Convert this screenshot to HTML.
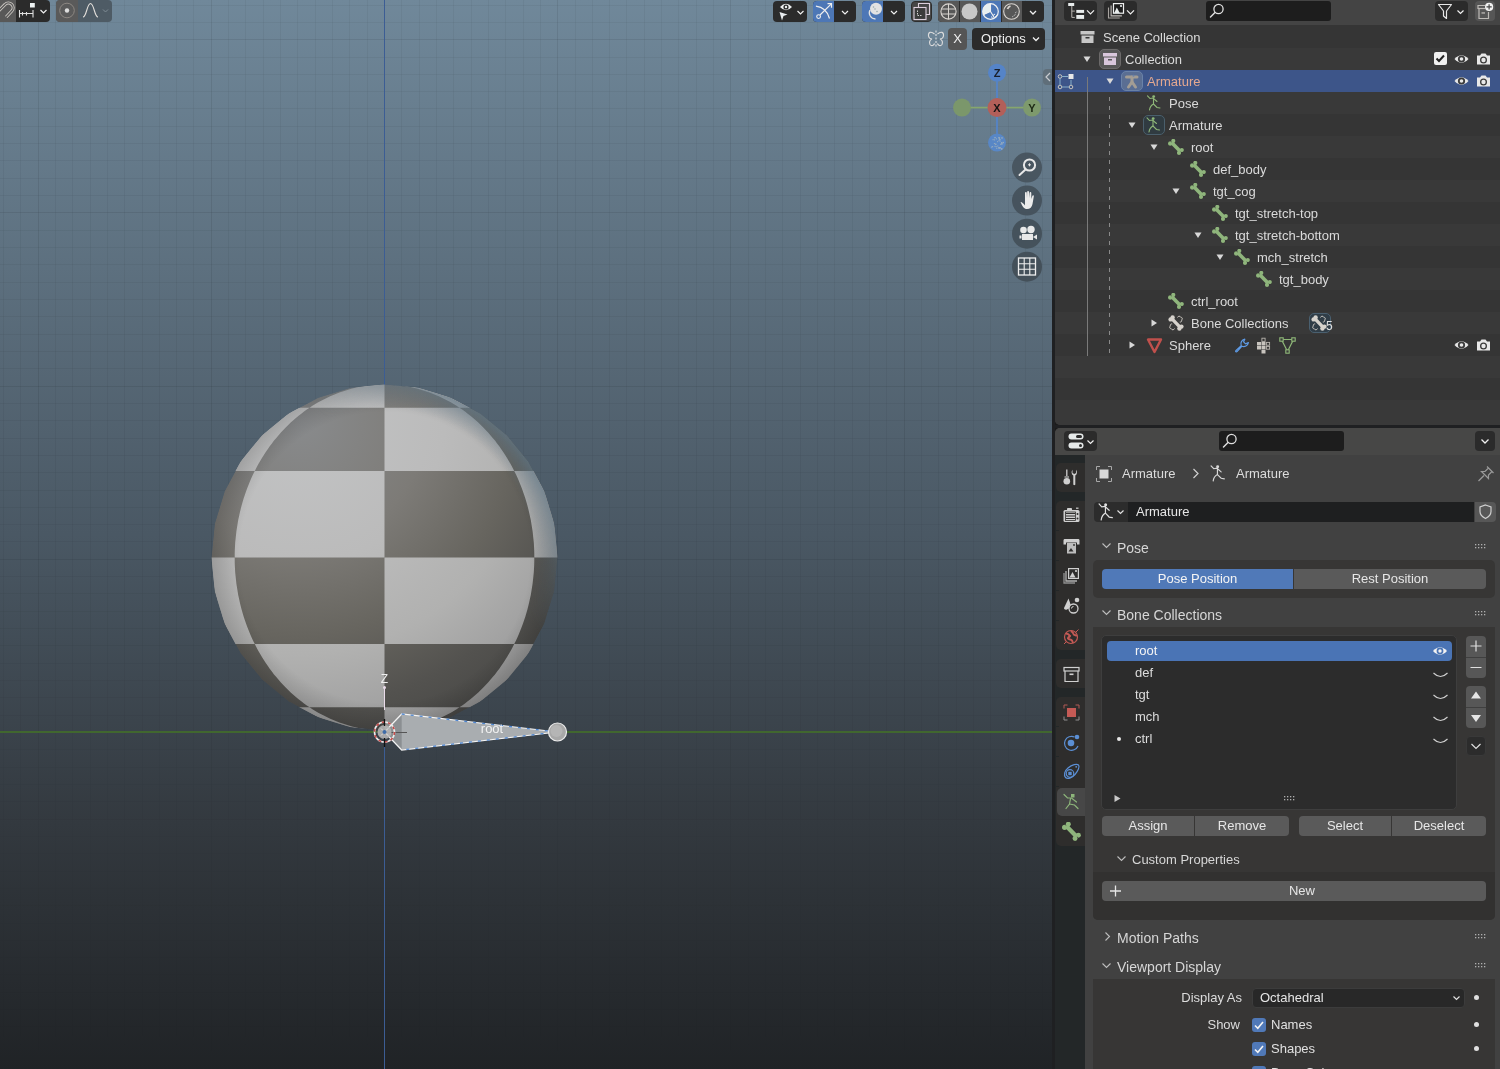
<!DOCTYPE html>
<html><head><meta charset="utf-8">
<style>
*{margin:0;padding:0;box-sizing:border-box}
html,body{width:1500px;height:1069px;overflow:hidden;background:#1b1b1b;font-family:"Liberation Sans",sans-serif;font-size:13px;color:#d8d8d8}
.a{position:absolute}
.t{position:absolute;white-space:nowrap;line-height:16px;will-change:transform}
svg{overflow:visible}
#vp{position:absolute;left:0;top:0;width:1052px;height:1069px;overflow:hidden;background:linear-gradient(to bottom,#70889a 0%,#4a5864 50%,#33393f 77%,#202326 100%)}
.btn{position:absolute;border-radius:4px}
.dk{background:#2b2b2b}
.gr{background:#565656}
.bl{background:#4d77b6}
</style></head><body>
<div id="vp"><svg width="1052" height="1069" style="position:absolute;left:0;top:0"><defs><linearGradient id="gf" x1="0" y1="0" x2="0" y2="1069" gradientUnits="userSpaceOnUse"><stop offset="0" stop-color="#fff" stop-opacity="1"/><stop offset="0.45" stop-color="#fff" stop-opacity="1"/><stop offset="0.68" stop-color="#fff" stop-opacity="0.7"/><stop offset="0.8" stop-color="#fff" stop-opacity="0.3"/><stop offset="1" stop-color="#fff" stop-opacity="0"/></linearGradient><mask id="gm"><rect width="1052" height="1069" fill="url(#gf)"/></mask></defs><g mask="url(#gm)"><path d="M3.5 0V1069M20.5 0V1069M55.5 0V1069M72.5 0V1069M90.5 0V1069M107.5 0V1069M124.5 0V1069M142.5 0V1069M159.5 0V1069M176.5 0V1069M193.5 0V1069M228.5 0V1069M245.5 0V1069M263.5 0V1069M280.5 0V1069M297.5 0V1069M315.5 0V1069M332.5 0V1069M349.5 0V1069M367.5 0V1069M401.5 0V1069M419.5 0V1069M436.5 0V1069M453.5 0V1069M471.5 0V1069M488.5 0V1069M505.5 0V1069M523.5 0V1069M540.5 0V1069M575.5 0V1069M592.5 0V1069M609.5 0V1069M626.5 0V1069M644.5 0V1069M661.5 0V1069M678.5 0V1069M696.5 0V1069M713.5 0V1069M748.5 0V1069M765.5 0V1069M782.5 0V1069M800.5 0V1069M817.5 0V1069M834.5 0V1069M852.5 0V1069M869.5 0V1069M886.5 0V1069M921.5 0V1069M938.5 0V1069M956.5 0V1069M973.5 0V1069M990.5 0V1069M1008.5 0V1069M1025.5 0V1069M1042.5 0V1069M0 5.5H1052M0 22.5H1052M0 57.5H1052M0 74.5H1052M0 91.5H1052M0 108.5H1052M0 126.5H1052M0 143.5H1052M0 160.5H1052M0 178.5H1052M0 195.5H1052M0 230.5H1052M0 247.5H1052M0 264.5H1052M0 282.5H1052M0 299.5H1052M0 316.5H1052M0 334.5H1052M0 351.5H1052M0 368.5H1052M0 403.5H1052M0 420.5H1052M0 438.5H1052M0 455.5H1052M0 472.5H1052M0 490.5H1052M0 507.5H1052M0 524.5H1052M0 541.5H1052M0 576.5H1052M0 593.5H1052M0 611.5H1052M0 628.5H1052M0 645.5H1052M0 663.5H1052M0 680.5H1052M0 697.5H1052M0 715.5H1052M0 749.5H1052M0 767.5H1052M0 784.5H1052M0 801.5H1052M0 819.5H1052M0 836.5H1052M0 853.5H1052M0 871.5H1052M0 888.5H1052M0 923.5H1052M0 940.5H1052M0 957.5H1052M0 974.5H1052M0 992.5H1052M0 1009.5H1052M0 1026.5H1052M0 1044.5H1052M0 1061.5H1052" stroke="#000" stroke-opacity="0.045" stroke-width="1"/><path d="M38.5 0V1069M211.5 0V1069M384.5 0V1069M557.5 0V1069M730.5 0V1069M904.5 0V1069M0 39.5H1052M0 212.5H1052M0 386.5H1052M0 559.5H1052M0 732.5H1052M0 905.5H1052" stroke="#000" stroke-opacity="0.08" stroke-width="1"/></g></svg><!-- viewport overlays -->
<div class="a" style="left:384px;top:0;width:1px;height:1069px;background:#3c5d94"></div>
<div class="a" style="left:0;top:731px;width:1052px;height:2px;background:#41672f"></div>
<svg width="1052" height="1069" style="position:absolute;left:0;top:0">
<defs><clipPath id="sc"><polygon points="557.5,557.5 554.2,591.3 544.3,623.7 528.3,653.6 506.8,679.8 480.6,701.3 450.7,717.3 418.3,727.2 384.5,730.5 350.7,727.2 318.3,717.3 288.4,701.3 262.2,679.8 240.7,653.6 224.7,623.7 214.8,591.3 211.5,557.5 214.8,523.7 224.7,491.3 240.7,461.4 262.2,435.2 288.4,413.7 318.3,397.7 350.7,387.8 384.5,384.5 418.3,387.8 450.7,397.7 480.6,413.7 506.8,435.2 528.3,461.4 544.3,491.3 554.2,523.7"/></clipPath>
<radialGradient id="gd" cx="300" cy="420" r="360" gradientUnits="userSpaceOnUse"><stop offset="0" stop-color="#898b8d"/><stop offset="0.35" stop-color="#7d7b77"/><stop offset="0.6" stop-color="#67655f"/><stop offset="0.8" stop-color="#53524f"/><stop offset="1" stop-color="#454543"/></radialGradient>
<radialGradient id="gl" cx="300" cy="420" r="360" gradientUnits="userSpaceOnUse"><stop offset="0" stop-color="#c3c4c5"/><stop offset="0.4" stop-color="#bbbbbb"/><stop offset="0.65" stop-color="#b1b1b0"/><stop offset="0.85" stop-color="#a0a0a0"/><stop offset="1" stop-color="#8c8c8c"/></radialGradient>
<radialGradient id="rim" cx="384.5" cy="557.5" r="173.0" gradientUnits="userSpaceOnUse"><stop offset="0" stop-color="#000" stop-opacity="0"/><stop offset="0.84" stop-color="#000" stop-opacity="0"/><stop offset="1" stop-color="#000" stop-opacity="0.16"/></radialGradient><radialGradient id="brim" cx="384.5" cy="557.5" r="173.0" gradientUnits="userSpaceOnUse"><stop offset="0" stop-color="#647f92" stop-opacity="0"/><stop offset="0.86" stop-color="#647f92" stop-opacity="0"/><stop offset="1" stop-color="#647f92" stop-opacity="0.7"/></radialGradient><linearGradient id="bmg" x1="514.2" y1="427.8" x2="315.3" y2="626.7" gradientUnits="userSpaceOnUse"><stop offset="0" stop-color="#fff"/><stop offset="0.45" stop-color="#000"/></linearGradient><mask id="bm"><rect x="0" y="0" width="1052" height="1069" fill="url(#bmg)"/></mask></defs>
<g clip-path="url(#sc)">
<polygon points="557.5,557.5 554.2,591.3 544.3,623.7 528.3,653.6 506.8,679.8 480.6,701.3 450.7,717.3 418.3,727.2 384.5,730.5 350.7,727.2 318.3,717.3 288.4,701.3 262.2,679.8 240.7,653.6 224.7,623.7 214.8,591.3 211.5,557.5 214.8,523.7 224.7,491.3 240.7,461.4 262.2,435.2 288.4,413.7 318.3,397.7 350.7,387.8 384.5,384.5 418.3,387.8 450.7,397.7 480.6,413.7 506.8,435.2 528.3,461.4 544.3,491.3 554.2,523.7" fill="url(#gd)"/>
<polygon points="384.5,730.5 384.5,730.5 384.5,730.5 384.5,730.5 384.5,730.5 384.5,730.5 384.5,730.5 384.5,730.5 384.5,730.5 384.5,730.5 384.5,730.5 384.5,730.5 384.5,730.5 384.5,730.5 384.5,730.5 384.5,730.5 384.5,730.5 384.5,730.5 384.5,730.5 384.5,730.5 384.5,730.5 384.5,730.5 384.5,730.5 384.5,730.5 384.5,730.5 381.2,730.5 378.0,730.3 374.7,730.1 371.4,729.8 368.2,729.5 364.9,729.0 361.7,728.5 358.5,727.9 355.3,727.2 352.1,726.4 348.9,725.5 345.7,724.6 342.6,723.6 339.4,722.5 336.3,721.3 333.3,720.1 330.2,718.7 327.2,717.3 324.2,715.8 321.2,714.3 318.2,712.7 315.3,711.0 312.4,709.2 309.6,707.3 308.7,707.3 307.8,707.3 306.9,707.3 306.1,707.3 305.3,707.3 304.6,707.3 303.9,707.3 303.2,707.3 302.6,707.3 302.0,707.3 301.5,707.3 300.9,707.3 300.5,707.3 300.1,707.3 299.7,707.3 299.3,707.3 299.0,707.3 298.7,707.3 298.5,707.3 298.3,707.3 298.2,707.3 298.1,707.3 298.0,707.3 298.0,707.3 301.3,709.2 304.6,711.0 308.0,712.7 311.4,714.3 314.8,715.8 318.3,717.3 321.8,718.7 325.3,720.1 328.9,721.3 332.5,722.5 336.1,723.6 339.7,724.6 343.4,725.5 347.1,726.4 350.7,727.2 354.5,727.9 358.2,728.5 361.9,729.0 365.7,729.5 369.4,729.8 373.2,730.1 377.0,730.3 380.7,730.5" fill="url(#gl)"/>
<polygon points="384.5,730.5 384.5,730.5 384.5,730.5 384.5,730.5 384.5,730.5 384.5,730.5 384.5,730.5 384.5,730.5 384.5,730.5 384.5,730.5 384.5,730.5 384.5,730.5 384.5,730.5 384.5,730.5 384.5,730.5 384.5,730.5 384.5,730.5 384.5,730.5 384.5,730.5 384.5,730.5 384.5,730.5 384.5,730.5 384.5,730.5 384.5,730.5 384.5,730.5 387.8,730.5 391.0,730.3 394.3,730.1 397.6,729.8 400.8,729.5 404.1,729.0 407.3,728.5 410.5,727.9 413.7,727.2 416.9,726.4 420.1,725.5 423.3,724.6 426.4,723.6 429.6,722.5 432.7,721.3 435.7,720.1 438.8,718.7 441.8,717.3 444.8,715.8 447.8,714.3 450.8,712.7 453.7,711.0 456.6,709.2 459.4,707.3 457.5,707.3 455.4,707.3 453.1,707.3 450.8,707.3 448.3,707.3 445.7,707.3 442.9,707.3 440.1,707.3 437.2,707.3 434.1,707.3 431.0,707.3 427.8,707.3 424.4,707.3 421.1,707.3 417.6,707.3 414.1,707.3 410.5,707.3 406.9,707.3 403.2,707.3 399.5,707.3 395.8,707.3 392.0,707.3 388.3,707.3 384.5,707.3 384.5,709.2 384.5,711.0 384.5,712.7 384.5,714.3 384.5,715.8 384.5,717.3 384.5,718.7 384.5,720.1 384.5,721.3 384.5,722.5 384.5,723.6 384.5,724.6 384.5,725.5 384.5,726.4 384.5,727.2 384.5,727.9 384.5,728.5 384.5,729.0 384.5,729.5 384.5,729.8 384.5,730.1 384.5,730.3 384.5,730.5" fill="url(#gl)"/>
<polygon points="309.6,707.3 311.5,707.3 313.6,707.3 315.9,707.3 318.2,707.3 320.7,707.3 323.3,707.3 326.1,707.3 328.9,707.3 331.8,707.3 334.9,707.3 338.0,707.3 341.2,707.3 344.6,707.3 347.9,707.3 351.4,707.3 354.9,707.3 358.5,707.3 362.1,707.3 365.8,707.3 369.5,707.3 373.2,707.3 377.0,707.3 380.7,707.3 384.5,707.3 384.5,705.4 384.5,703.4 384.5,701.3 384.5,699.2 384.5,697.0 384.5,694.8 384.5,692.4 384.5,690.0 384.5,687.6 384.5,685.0 384.5,682.5 384.5,679.8 384.5,677.1 384.5,674.4 384.5,671.6 384.5,668.7 384.5,665.8 384.5,662.8 384.5,659.8 384.5,656.7 384.5,653.6 384.5,650.5 384.5,647.2 384.5,644.0 378.0,644.0 371.4,644.0 364.9,644.0 358.5,644.0 352.1,644.0 345.7,644.0 339.4,644.0 333.3,644.0 327.2,644.0 321.2,644.0 315.3,644.0 309.6,644.0 304.0,644.0 298.6,644.0 293.3,644.0 288.2,644.0 283.3,644.0 278.6,644.0 274.0,644.0 269.7,644.0 265.6,644.0 261.8,644.0 258.1,644.0 254.8,644.0 256.4,647.2 258.1,650.5 259.9,653.6 261.8,656.7 263.7,659.8 265.6,662.8 267.7,665.8 269.7,668.7 271.9,671.6 274.0,674.4 276.3,677.1 278.6,679.8 280.9,682.5 283.3,685.0 285.7,687.6 288.2,690.0 290.7,692.4 293.3,694.8 295.9,697.0 298.6,699.2 301.3,701.3 304.0,703.4 306.8,705.4" fill="url(#gl)"/>
<polygon points="459.4,707.3 460.3,707.3 461.2,707.3 462.1,707.3 462.9,707.3 463.7,707.3 464.4,707.3 465.1,707.3 465.8,707.3 466.4,707.3 467.0,707.3 467.5,707.3 468.1,707.3 468.5,707.3 468.9,707.3 469.3,707.3 469.7,707.3 470.0,707.3 470.3,707.3 470.5,707.3 470.7,707.3 470.8,707.3 470.9,707.3 471.0,707.3 471.0,707.3 474.2,705.4 477.5,703.4 480.6,701.3 483.7,699.2 486.8,697.0 489.8,694.8 492.8,692.4 495.7,690.0 498.6,687.6 501.4,685.0 504.1,682.5 506.8,679.8 509.5,677.1 512.0,674.4 514.6,671.6 517.0,668.7 519.4,665.8 521.8,662.8 524.0,659.8 526.2,656.7 528.3,653.6 530.4,650.5 532.4,647.2 534.3,644.0 534.3,644.0 534.2,644.0 534.0,644.0 533.8,644.0 533.4,644.0 533.0,644.0 532.6,644.0 532.0,644.0 531.4,644.0 530.8,644.0 530.0,644.0 529.2,644.0 528.3,644.0 527.4,644.0 526.4,644.0 525.3,644.0 524.1,644.0 522.9,644.0 521.6,644.0 520.3,644.0 518.9,644.0 517.4,644.0 515.9,644.0 514.2,644.0 512.6,647.2 510.9,650.5 509.1,653.6 507.2,656.7 505.3,659.8 503.4,662.8 501.3,665.8 499.3,668.7 497.1,671.6 495.0,674.4 492.7,677.1 490.4,679.8 488.1,682.5 485.7,685.0 483.3,687.6 480.8,690.0 478.3,692.4 475.7,694.8 473.1,697.0 470.4,699.2 467.7,701.3 465.0,703.4 462.2,705.4" fill="url(#gl)"/>
<polygon points="234.7,644.0 234.7,644.0 234.8,644.0 235.0,644.0 235.2,644.0 235.6,644.0 236.0,644.0 236.4,644.0 237.0,644.0 237.6,644.0 238.2,644.0 239.0,644.0 239.8,644.0 240.7,644.0 241.6,644.0 242.6,644.0 243.7,644.0 244.9,644.0 246.1,644.0 247.4,644.0 248.7,644.0 250.1,644.0 251.6,644.0 253.1,644.0 254.8,644.0 253.1,640.7 251.6,637.4 250.1,634.0 248.7,630.6 247.4,627.2 246.1,623.7 244.9,620.2 243.7,616.7 242.6,613.1 241.6,609.5 240.7,605.9 239.8,602.3 239.0,598.6 238.2,594.9 237.6,591.3 237.0,587.5 236.4,583.8 236.0,580.1 235.6,576.3 235.2,572.6 235.0,568.8 234.8,565.0 234.7,561.3 234.7,557.5 232.8,557.5 231.0,557.5 229.3,557.5 227.7,557.5 226.2,557.5 224.7,557.5 223.3,557.5 221.9,557.5 220.7,557.5 219.5,557.5 218.4,557.5 217.4,557.5 216.5,557.5 215.6,557.5 214.8,557.5 214.1,557.5 213.5,557.5 213.0,557.5 212.5,557.5 212.2,557.5 211.9,557.5 211.7,557.5 211.5,557.5 211.5,557.5 211.5,561.3 211.7,565.0 211.9,568.8 212.2,572.6 212.5,576.3 213.0,580.1 213.5,583.8 214.1,587.5 214.8,591.3 215.6,594.9 216.5,598.6 217.4,602.3 218.4,605.9 219.5,609.5 220.7,613.1 221.9,616.7 223.3,620.2 224.7,623.7 226.2,627.2 227.7,630.6 229.3,634.0 231.0,637.4 232.8,640.7" fill="url(#gl)"/>
<polygon points="384.5,644.0 391.0,644.0 397.6,644.0 404.1,644.0 410.5,644.0 416.9,644.0 423.3,644.0 429.6,644.0 435.7,644.0 441.8,644.0 447.8,644.0 453.7,644.0 459.4,644.0 465.0,644.0 470.4,644.0 475.7,644.0 480.8,644.0 485.7,644.0 490.4,644.0 495.0,644.0 499.3,644.0 503.4,644.0 507.2,644.0 510.9,644.0 514.2,644.0 515.9,640.7 517.4,637.4 518.9,634.0 520.3,630.6 521.6,627.2 522.9,623.7 524.1,620.2 525.3,616.7 526.4,613.1 527.4,609.5 528.3,605.9 529.2,602.3 530.0,598.6 530.8,594.9 531.4,591.3 532.0,587.5 532.6,583.8 533.0,580.1 533.4,576.3 533.8,572.6 534.0,568.8 534.2,565.0 534.3,561.3 534.3,557.5 530.4,557.5 526.2,557.5 521.8,557.5 517.0,557.5 512.0,557.5 506.8,557.5 501.4,557.5 495.7,557.5 489.8,557.5 483.7,557.5 477.5,557.5 471.0,557.5 464.4,557.5 457.6,557.5 450.7,557.5 443.7,557.5 436.5,557.5 429.3,557.5 421.9,557.5 414.5,557.5 407.1,557.5 399.6,557.5 392.0,557.5 384.5,557.5 384.5,561.3 384.5,565.0 384.5,568.8 384.5,572.6 384.5,576.3 384.5,580.1 384.5,583.8 384.5,587.5 384.5,591.3 384.5,594.9 384.5,598.6 384.5,602.3 384.5,605.9 384.5,609.5 384.5,613.1 384.5,616.7 384.5,620.2 384.5,623.7 384.5,627.2 384.5,630.6 384.5,634.0 384.5,637.4 384.5,640.7" fill="url(#gl)"/>
<polygon points="234.7,557.5 238.6,557.5 242.8,557.5 247.2,557.5 252.0,557.5 257.0,557.5 262.2,557.5 267.6,557.5 273.3,557.5 279.2,557.5 285.3,557.5 291.5,557.5 298.0,557.5 304.6,557.5 311.4,557.5 318.3,557.5 325.3,557.5 332.5,557.5 339.7,557.5 347.1,557.5 354.5,557.5 361.9,557.5 369.4,557.5 377.0,557.5 384.5,557.5 384.5,553.7 384.5,550.0 384.5,546.2 384.5,542.4 384.5,538.7 384.5,534.9 384.5,531.2 384.5,527.5 384.5,523.7 384.5,520.1 384.5,516.4 384.5,512.7 384.5,509.1 384.5,505.5 384.5,501.9 384.5,498.3 384.5,494.8 384.5,491.3 384.5,487.8 384.5,484.4 384.5,481.0 384.5,477.6 384.5,474.3 384.5,471.0 378.0,471.0 371.4,471.0 364.9,471.0 358.5,471.0 352.1,471.0 345.7,471.0 339.4,471.0 333.3,471.0 327.2,471.0 321.2,471.0 315.3,471.0 309.6,471.0 304.0,471.0 298.6,471.0 293.3,471.0 288.2,471.0 283.3,471.0 278.6,471.0 274.0,471.0 269.7,471.0 265.6,471.0 261.8,471.0 258.1,471.0 254.8,471.0 253.1,474.3 251.6,477.6 250.1,481.0 248.7,484.4 247.4,487.8 246.1,491.3 244.9,494.8 243.7,498.3 242.6,501.9 241.6,505.5 240.7,509.1 239.8,512.7 239.0,516.4 238.2,520.1 237.6,523.7 237.0,527.5 236.4,531.2 236.0,534.9 235.6,538.7 235.2,542.4 235.0,546.2 234.8,550.0 234.7,553.7" fill="url(#gl)"/>
<polygon points="534.3,557.5 536.2,557.5 538.0,557.5 539.7,557.5 541.3,557.5 542.8,557.5 544.3,557.5 545.7,557.5 547.1,557.5 548.3,557.5 549.5,557.5 550.6,557.5 551.6,557.5 552.5,557.5 553.4,557.5 554.2,557.5 554.9,557.5 555.5,557.5 556.0,557.5 556.5,557.5 556.8,557.5 557.1,557.5 557.3,557.5 557.5,557.5 557.5,557.5 557.5,553.7 557.3,550.0 557.1,546.2 556.8,542.4 556.5,538.7 556.0,534.9 555.5,531.2 554.9,527.5 554.2,523.7 553.4,520.1 552.5,516.4 551.6,512.7 550.6,509.1 549.5,505.5 548.3,501.9 547.1,498.3 545.7,494.8 544.3,491.3 542.8,487.8 541.3,484.4 539.7,481.0 538.0,477.6 536.2,474.3 534.3,471.0 534.3,471.0 534.2,471.0 534.0,471.0 533.8,471.0 533.4,471.0 533.0,471.0 532.6,471.0 532.0,471.0 531.4,471.0 530.8,471.0 530.0,471.0 529.2,471.0 528.3,471.0 527.4,471.0 526.4,471.0 525.3,471.0 524.1,471.0 522.9,471.0 521.6,471.0 520.3,471.0 518.9,471.0 517.4,471.0 515.9,471.0 514.2,471.0 515.9,474.3 517.4,477.6 518.9,481.0 520.3,484.4 521.6,487.8 522.9,491.3 524.1,494.8 525.3,498.3 526.4,501.9 527.4,505.5 528.3,509.1 529.2,512.7 530.0,516.4 530.8,520.1 531.4,523.7 532.0,527.5 532.6,531.2 533.0,534.9 533.4,538.7 533.8,542.4 534.0,546.2 534.2,550.0 534.3,553.7" fill="url(#gl)"/>
<polygon points="234.7,471.0 234.7,471.0 234.8,471.0 235.0,471.0 235.2,471.0 235.6,471.0 236.0,471.0 236.4,471.0 237.0,471.0 237.6,471.0 238.2,471.0 239.0,471.0 239.8,471.0 240.7,471.0 241.6,471.0 242.6,471.0 243.7,471.0 244.9,471.0 246.1,471.0 247.4,471.0 248.7,471.0 250.1,471.0 251.6,471.0 253.1,471.0 254.8,471.0 256.4,467.8 258.1,464.5 259.9,461.4 261.8,458.3 263.7,455.2 265.6,452.2 267.7,449.2 269.7,446.3 271.9,443.4 274.0,440.6 276.3,437.9 278.6,435.2 280.9,432.5 283.3,430.0 285.7,427.4 288.2,425.0 290.7,422.6 293.3,420.2 295.9,418.0 298.6,415.8 301.3,413.7 304.0,411.6 306.8,409.6 309.6,407.7 308.7,407.7 307.8,407.7 306.9,407.7 306.1,407.7 305.3,407.7 304.6,407.7 303.9,407.7 303.2,407.7 302.6,407.7 302.0,407.7 301.5,407.7 300.9,407.7 300.5,407.7 300.1,407.7 299.7,407.7 299.3,407.7 299.0,407.7 298.7,407.7 298.5,407.7 298.3,407.7 298.2,407.7 298.1,407.7 298.0,407.7 298.0,407.7 294.8,409.6 291.5,411.6 288.4,413.7 285.3,415.8 282.2,418.0 279.2,420.2 276.2,422.6 273.3,425.0 270.4,427.4 267.6,430.0 264.9,432.5 262.2,435.2 259.5,437.9 257.0,440.6 254.4,443.4 252.0,446.3 249.6,449.2 247.2,452.2 245.0,455.2 242.8,458.3 240.7,461.4 238.6,464.5 236.6,467.8" fill="url(#gl)"/>
<polygon points="384.5,471.0 391.0,471.0 397.6,471.0 404.1,471.0 410.5,471.0 416.9,471.0 423.3,471.0 429.6,471.0 435.7,471.0 441.8,471.0 447.8,471.0 453.7,471.0 459.4,471.0 465.0,471.0 470.4,471.0 475.7,471.0 480.8,471.0 485.7,471.0 490.4,471.0 495.0,471.0 499.3,471.0 503.4,471.0 507.2,471.0 510.9,471.0 514.2,471.0 512.6,467.8 510.9,464.5 509.1,461.4 507.2,458.3 505.3,455.2 503.4,452.2 501.3,449.2 499.3,446.3 497.1,443.4 495.0,440.6 492.7,437.9 490.4,435.2 488.1,432.5 485.7,430.0 483.3,427.4 480.8,425.0 478.3,422.6 475.7,420.2 473.1,418.0 470.4,415.8 467.7,413.7 465.0,411.6 462.2,409.6 459.4,407.7 457.5,407.7 455.4,407.7 453.1,407.7 450.8,407.7 448.3,407.7 445.7,407.7 442.9,407.7 440.1,407.7 437.2,407.7 434.1,407.7 431.0,407.7 427.8,407.7 424.4,407.7 421.1,407.7 417.6,407.7 414.1,407.7 410.5,407.7 406.9,407.7 403.2,407.7 399.5,407.7 395.8,407.7 392.0,407.7 388.3,407.7 384.5,407.7 384.5,409.6 384.5,411.6 384.5,413.7 384.5,415.8 384.5,418.0 384.5,420.2 384.5,422.6 384.5,425.0 384.5,427.4 384.5,430.0 384.5,432.5 384.5,435.2 384.5,437.9 384.5,440.6 384.5,443.4 384.5,446.3 384.5,449.2 384.5,452.2 384.5,455.2 384.5,458.3 384.5,461.4 384.5,464.5 384.5,467.8" fill="url(#gl)"/>
<polygon points="309.6,407.7 311.5,407.7 313.6,407.7 315.9,407.7 318.2,407.7 320.7,407.7 323.3,407.7 326.1,407.7 328.9,407.7 331.8,407.7 334.9,407.7 338.0,407.7 341.2,407.7 344.6,407.7 347.9,407.7 351.4,407.7 354.9,407.7 358.5,407.7 362.1,407.7 365.8,407.7 369.5,407.7 373.2,407.7 377.0,407.7 380.7,407.7 384.5,407.7 384.5,405.8 384.5,404.0 384.5,402.3 384.5,400.7 384.5,399.2 384.5,397.7 384.5,396.3 384.5,394.9 384.5,393.7 384.5,392.5 384.5,391.4 384.5,390.4 384.5,389.5 384.5,388.6 384.5,387.8 384.5,387.1 384.5,386.5 384.5,386.0 384.5,385.5 384.5,385.2 384.5,384.9 384.5,384.7 384.5,384.5 384.5,384.5 384.5,384.5 384.5,384.5 384.5,384.5 384.5,384.5 384.5,384.5 384.5,384.5 384.5,384.5 384.5,384.5 384.5,384.5 384.5,384.5 384.5,384.5 384.5,384.5 384.5,384.5 384.5,384.5 384.5,384.5 384.5,384.5 384.5,384.5 384.5,384.5 384.5,384.5 384.5,384.5 384.5,384.5 384.5,384.5 384.5,384.5 384.5,384.5 381.2,384.5 378.0,384.7 374.7,384.9 371.4,385.2 368.2,385.5 364.9,386.0 361.7,386.5 358.5,387.1 355.3,387.8 352.1,388.6 348.9,389.5 345.7,390.4 342.6,391.4 339.4,392.5 336.3,393.7 333.3,394.9 330.2,396.3 327.2,397.7 324.2,399.2 321.2,400.7 318.2,402.3 315.3,404.0 312.4,405.8" fill="url(#gl)"/>
<polygon points="459.4,407.7 460.3,407.7 461.2,407.7 462.1,407.7 462.9,407.7 463.7,407.7 464.4,407.7 465.1,407.7 465.8,407.7 466.4,407.7 467.0,407.7 467.5,407.7 468.1,407.7 468.5,407.7 468.9,407.7 469.3,407.7 469.7,407.7 470.0,407.7 470.3,407.7 470.5,407.7 470.7,407.7 470.8,407.7 470.9,407.7 471.0,407.7 471.0,407.7 467.7,405.8 464.4,404.0 461.0,402.3 457.6,400.7 454.2,399.2 450.7,397.7 447.2,396.3 443.7,394.9 440.1,393.7 436.5,392.5 432.9,391.4 429.3,390.4 425.6,389.5 421.9,388.6 418.3,387.8 414.5,387.1 410.8,386.5 407.1,386.0 403.3,385.5 399.6,385.2 395.8,384.9 392.0,384.7 388.3,384.5 384.5,384.5 384.5,384.5 384.5,384.5 384.5,384.5 384.5,384.5 384.5,384.5 384.5,384.5 384.5,384.5 384.5,384.5 384.5,384.5 384.5,384.5 384.5,384.5 384.5,384.5 384.5,384.5 384.5,384.5 384.5,384.5 384.5,384.5 384.5,384.5 384.5,384.5 384.5,384.5 384.5,384.5 384.5,384.5 384.5,384.5 384.5,384.5 384.5,384.5 387.8,384.5 391.0,384.7 394.3,384.9 397.6,385.2 400.8,385.5 404.1,386.0 407.3,386.5 410.5,387.1 413.7,387.8 416.9,388.6 420.1,389.5 423.3,390.4 426.4,391.4 429.6,392.5 432.7,393.7 435.7,394.9 438.8,396.3 441.8,397.7 444.8,399.2 447.8,400.7 450.8,402.3 453.7,404.0 456.6,405.8" fill="url(#gl)"/>
<polygon points="557.5,557.5 554.2,591.3 544.3,623.7 528.3,653.6 506.8,679.8 480.6,701.3 450.7,717.3 418.3,727.2 384.5,730.5 350.7,727.2 318.3,717.3 288.4,701.3 262.2,679.8 240.7,653.6 224.7,623.7 214.8,591.3 211.5,557.5 214.8,523.7 224.7,491.3 240.7,461.4 262.2,435.2 288.4,413.7 318.3,397.7 350.7,387.8 384.5,384.5 418.3,387.8 450.7,397.7 480.6,413.7 506.8,435.2 528.3,461.4 544.3,491.3 554.2,523.7" fill="url(#rim)"/>
<polygon points="557.5,557.5 554.2,591.3 544.3,623.7 528.3,653.6 506.8,679.8 480.6,701.3 450.7,717.3 418.3,727.2 384.5,730.5 350.7,727.2 318.3,717.3 288.4,701.3 262.2,679.8 240.7,653.6 224.7,623.7 214.8,591.3 211.5,557.5 214.8,523.7 224.7,491.3 240.7,461.4 262.2,435.2 288.4,413.7 318.3,397.7 350.7,387.8 384.5,384.5 418.3,387.8 450.7,397.7 480.6,413.7 506.8,435.2 528.3,461.4 544.3,491.3 554.2,523.7" fill="url(#brim)" mask="url(#bm)"/>
</g></svg><!-- bone + cursor -->
<svg class="a" style="left:0;top:0;will-change:transform" width="1052" height="1069">
 <line x1="384.5" y1="687" x2="384.5" y2="710" stroke="#eadcea" stroke-width="1"/>
 <circle cx="384.5" cy="687.5" r="1.5" fill="#eadcea"/>
 <text x="384.5" y="683" fill="#f0f0f0" font-size="12" font-family="Liberation Sans" text-anchor="middle">Z</text>
 <polygon points="384.5,732 401.7,714 557.5,732 401.7,750" fill="#a9adb0"/>
 <polygon points="384.5,732 401.7,714 401.7,750" fill="#8b8f92"/>
 <polyline points="384.5,732 401.7,714 557.5,732 401.7,750 384.5,732" fill="none" stroke="#f4f4f4" stroke-width="1.2"/>
 <polyline points="401.7,714 557.5,732 401.7,750" fill="none" stroke="#4f86d0" stroke-width="1.3" stroke-dasharray="3 6"/>
 <circle cx="557.5" cy="732" r="9" fill="#a8a8a8" stroke="#ececec" stroke-width="1.2"/>
 <circle cx="556.5" cy="731" r="6" fill="#b5b5b5"/>
 <line x1="376" y1="732.5" x2="407" y2="732.5" stroke="#555" stroke-width="1"/>
 <circle cx="384.5" cy="732" r="7" fill="#b4b4b4" opacity=".9"/>
 <circle cx="384.5" cy="732" r="10" fill="none" stroke="#ececec" stroke-width="1.6"/>
 <circle cx="384.5" cy="732" r="10" fill="none" stroke="#c24c4a" stroke-width="1.6" stroke-dasharray="3 3.3"/>
 <line x1="384.5" y1="719" x2="384.5" y2="726" stroke="#111" stroke-width="1.3"/>
 <line x1="384.5" y1="738" x2="384.5" y2="747" stroke="#111" stroke-width="1.3"/>
 <path d="M381 728.5 L383 730.5 M388 728.5 L386 730.5 M381 735.5 L383 733.5 M388 735.5 L386 733.5" stroke="#e8e8e8" stroke-width=".8"/>
 <circle cx="384.5" cy="732" r="2" fill="#3f6ca8"/>
 <text x="492" y="733" fill="#f2f2f2" font-size="13" font-family="Liberation Sans" text-anchor="middle">root</text>
</svg>
<!-- top-left header buttons -->
<div class="btn" style="left:-6px;top:0px;width:56px;height:21.5px;background:#2b2b2b"></div>
<div class="a" style="left:0;top:0px;width:15.5px;height:21.5px;background:#585858"></div>
<svg class="a" style="left:0;top:0px" width="50" height="22">
 <path d="M-3 12.5 L5 4.5 A4.6 4.6 0 0 1 11.8 11 L6.2 17" fill="none" stroke="#cdc9c4" stroke-width="3.2"/>
 <path d="M-3 12.5 L5 4.5 A4.6 4.6 0 0 1 11.8 11 L6.2 17" fill="none" stroke="#585858" stroke-width="1.4"/>
 <path d="M19.5 10 V17.5 M33 10 V17.5 M19.5 13.5 H33 M22.5 12 V15.5 M26.5 12 V15.5" stroke="#e0e0e0" stroke-width="1.1" fill="none"/>
 <rect x="30" y="3" width="4.8" height="4.5" fill="#eef2f2"/>
 <path d="M40.5 10 L43.5 13 L46.5 10" stroke="#f0f0f0" stroke-width="1.2" fill="none"/>
</svg>
<div class="btn" style="left:56px;top:0px;width:56px;height:21.5px;background:#4e5b65"></div>
<div class="a" style="left:56px;top:0px;width:21.5px;height:21.5px;background:#5a5a5a;border-radius:4px 0 0 4px"></div>
<svg class="a" style="left:56px;top:0px" width="56" height="22">
 <circle cx="11" cy="10.5" r="7.3" fill="none" stroke="#8c8782" stroke-width="1"/>
 <circle cx="11" cy="10.5" r="2.2" fill="#dedede"/>
 <path d="M27 17 C30.5 17 31 3.5 34.5 3.5 C38 3.5 38.5 17 42 17" fill="none" stroke="#e4e0dc" stroke-width="1.1"/>
 <path d="M47 9.5 L49.5 12 L52 9.5" stroke="#7f8c95" stroke-width="1" fill="none"/>
</svg>
<!-- top-right header -->
<div class="btn dk" style="left:773px;top:1px;width:34px;height:21px"></div>
<svg class="a" style="left:773px;top:1px" width="34" height="21">
 <path d="M6.5 11 L14.5 13.5 L10.5 15 L9 19.5 Z" fill="#e8ecee"/>
 <path d="M7 6 Q13 -0.5 19 6 Q13 12.5 7 6Z" fill="#eef0f0"/>
 <circle cx="13" cy="6" r="2.6" fill="#2b2b2b"/><circle cx="13" cy="6" r="1.2" fill="#eef0f0"/>
 <path d="M24.5 10 L27.5 13 L30.5 10" stroke="#f0f0f0" stroke-width="1.2" fill="none"/>
</svg>
<div class="btn dk" style="left:813px;top:1px;width:43px;height:21px"></div>
<div class="a bl" style="left:813px;top:1px;width:21px;height:21px;border-radius:4px 0 0 4px"></div>
<svg class="a" style="left:813px;top:1px" width="43" height="21">
 <path d="M2.9 5.2 Q13.5 6.5 16.5 17.5" fill="none" stroke="#eeeeee" stroke-width="1.2"/>
 <path d="M7 14 L18.3 2.9 M14.5 2.7 H18.5 V6.8" fill="none" stroke="#eeeeee" stroke-width="1.2"/>
 <circle cx="5.6" cy="15.6" r="1.9" fill="none" stroke="#eeeeee" stroke-width="1.1"/>
 <path d="M29 10 L32 13 L35 10" stroke="#f0f0f0" stroke-width="1.2" fill="none"/>
</svg>
<div class="btn dk" style="left:862px;top:1px;width:43px;height:21px"></div>
<div class="a bl" style="left:862px;top:1px;width:21px;height:21px;border-radius:4px 0 0 4px"></div>
<svg class="a" style="left:862px;top:1px" width="43" height="21">
 <circle cx="14" cy="7.7" r="6" fill="#e2e2e2"/>
 <circle cx="11.5" cy="6" r=".8" fill="#9aa"/><circle cx="13" cy="8" r=".8" fill="#9aa"/><circle cx="15" cy="10.5" r=".8" fill="#9aa"/>
 <path d="M8 9 A6.2 6.2 0 0 0 13.5 18" fill="none" stroke="#e2e2e2" stroke-width="1.3"/>
 <path d="M29 10 L32 13 L35 10" stroke="#f0f0f0" stroke-width="1.2" fill="none"/>
</svg>
<div class="btn" style="left:911px;top:1px;width:21px;height:21px;background:#454545;border:1px solid #2e2e2e"></div>
<svg class="a" style="left:911px;top:1px" width="21" height="21">
 <path d="M7.5 6 V2.5 H18.5 V13.5 H15" fill="none" stroke="#dccfdc" stroke-width="1.1"/>
 <rect x="3" y="6.5" width="12" height="12" fill="#3a3a3a" stroke="#dccfdc" stroke-width="1.1"/>
 <path d="M6.5 9.5 V14.5 H11" fill="none" stroke="#cfcfcf" stroke-width="1" stroke-dasharray="1.5 1"/>
</svg>
<div class="btn dk" style="left:938px;top:1px;width:106px;height:21px"></div>
<div class="a" style="left:938px;top:1px;width:21px;height:21px;background:#575757;border-radius:4px 0 0 4px"></div>
<div class="a" style="left:959.5px;top:1px;width:20.5px;height:21px;background:#575757"></div>
<div class="a bl" style="left:980.5px;top:1px;width:20.5px;height:21px"></div>
<div class="a" style="left:1001.5px;top:1px;width:20.5px;height:21px;background:#575757"></div>
<svg class="a" style="left:938px;top:1px" width="106" height="21">
 <circle cx="10.5" cy="10.5" r="7.6" fill="none" stroke="#d8d4d0" stroke-width="1.1"/>
 <path d="M10.5 2.9 V18.1 M3 8 H18 M3 13 H18" stroke="#d8d4d0" stroke-width="1"/>
 <circle cx="31.5" cy="10.5" r="8" fill="#c8c8c8"/>
 <path d="M52.5 10.5 V2.7 A7.8 7.8 0 0 0 45.5 14 Z" fill="#e6eef0"/>
 <circle cx="52.5" cy="10.5" r="7.8" fill="none" stroke="#f0f0f0" stroke-width="1.2"/>
 <path d="M52.5 2.7 V10.5 L45.5 13.5 M52.5 10.5 L56.5 17" stroke="#f0f0f0" stroke-width="1.1" fill="none"/>
 <path d="M55 14.5 L57 13 M57 16 L59 14.5 M53.5 15.5 L54.5 17.5" stroke="#f0f0f0" stroke-width="1"/>
 <circle cx="73.5" cy="10.5" r="7.8" fill="none" stroke="#d8d4d0" stroke-width="1.1"/>
 <path d="M69.5 8 A5 5 0 0 1 72.5 5" fill="none" stroke="#d8d4d0" stroke-width="1.8"/>
 <path d="M77 12 L78.5 11 M76 14.5 L77.5 13.5 M74 16 L75.5 15" stroke="#bdbdbd" stroke-width=".9"/>
 <path d="M92 10 L95 13 L98 10" stroke="#f0f0f0" stroke-width="1.3" fill="none"/>
</svg>
<!-- row 2 -->
<svg class="a" style="left:927px;top:30px" width="18" height="18">
 <path d="M9 0.5 V17.5" stroke="#e8e8e8" stroke-width="1" stroke-dasharray="2 1.5"/>
 <path d="M7.5 4 C4 1 1 2 1.5 6 C2 8.5 4 9 5 9 C3 10 2 12 3 14.5 C4.5 16.5 7 15.5 7.5 13.5" fill="none" stroke="#dcdcdc" stroke-width="1.1"/>
 <path d="M10.5 4 C14 1 17 2 16.5 6 C16 8.5 14 9 13 9 C15 10 16 12 15 14.5 C13.5 16.5 11 15.5 10.5 13.5" fill="none" stroke="#dcdcdc" stroke-width="1.1"/>
</svg>
<div class="btn" style="left:948px;top:28px;width:19px;height:22px;background:#555555"></div>
<div class="t" style="left:948px;top:31px;width:19px;text-align:center;color:#f0f0f0;font-size:13px">X</div>
<div class="btn dk" style="left:972px;top:28px;width:73px;height:22px"></div>
<div class="t" style="left:981px;top:31px;color:#f0f0f0;font-size:13px">Options</div>
<svg class="a" style="left:1032px;top:36px" width="10" height="8"><path d="M1 1.5 L4 4.5 L7 1.5" stroke="#f0f0f0" stroke-width="1.3" fill="none"/></svg>
<!-- navigation gizmo -->
<svg class="a" style="left:940px;top:55px;will-change:transform" width="112" height="105">
 <line x1="57" y1="18" x2="57" y2="88" stroke="#5584c8" stroke-width="1.8"/>
 <line x1="22" y1="52.6" x2="92" y2="52.6" stroke="#86a66e" stroke-width="1.8"/>
 <circle cx="22" cy="52.6" r="9" fill="#7b976b"/>
 <circle cx="57" cy="87.6" r="9" fill="#5887c6"/>
 <rect x="53.9" y="88.1" width="1" height="1" fill="#9fb0bd"/><rect x="55.4" y="88.8" width="1" height="1" fill="#9fb0bd"/><rect x="58.5" y="82.4" width="1" height="1" fill="#9fb0bd"/><rect x="51.2" y="91.6" width="1" height="1" fill="#9fb0bd"/><rect x="54.1" y="84.4" width="1" height="1" fill="#9fb0bd"/><rect x="62.9" y="87.2" width="1" height="1" fill="#9fb0bd"/><rect x="61.0" y="87.3" width="1" height="1" fill="#9fb0bd"/><rect x="58.7" y="83.4" width="1" height="1" fill="#9fb0bd"/><rect x="58.6" y="92.0" width="1" height="1" fill="#9fb0bd"/><rect x="57.3" y="90.5" width="1" height="1" fill="#9fb0bd"/><rect x="59.1" y="82.4" width="1" height="1" fill="#9fb0bd"/><rect x="60.1" y="88.7" width="1" height="1" fill="#9fb0bd"/><rect x="54.6" y="82.0" width="1" height="1" fill="#9fb0bd"/><rect x="61.4" y="87.3" width="1" height="1" fill="#9fb0bd"/><rect x="59.6" y="92.1" width="1" height="1" fill="#9fb0bd"/><rect x="59.6" y="92.7" width="1" height="1" fill="#9fb0bd"/><rect x="55.7" y="91.2" width="1" height="1" fill="#9fb0bd"/><rect x="56.3" y="92.8" width="1" height="1" fill="#9fb0bd"/><rect x="61.5" y="82.8" width="1" height="1" fill="#9fb0bd"/><rect x="52.6" y="84.2" width="1" height="1" fill="#9fb0bd"/><rect x="62.6" y="86.8" width="1" height="1" fill="#9fb0bd"/><rect x="58.5" y="85.2" width="1" height="1" fill="#9fb0bd"/><rect x="57.1" y="86.2" width="1" height="1" fill="#9fb0bd"/><rect x="55.2" y="88.6" width="1" height="1" fill="#9fb0bd"/><rect x="58.0" y="92.5" width="1" height="1" fill="#9fb0bd"/><rect x="59.2" y="92.7" width="1" height="1" fill="#9fb0bd"/><rect x="61.3" y="93.5" width="1" height="1" fill="#9fb0bd"/><rect x="59.1" y="83.6" width="1" height="1" fill="#9fb0bd"/><rect x="61.3" y="93.2" width="1" height="1" fill="#9fb0bd"/><rect x="61.9" y="88.4" width="1" height="1" fill="#9fb0bd"/><rect x="59.6" y="84.1" width="1" height="1" fill="#9fb0bd"/><rect x="61.0" y="88.5" width="1" height="1" fill="#9fb0bd"/><rect x="54.4" y="82.4" width="1" height="1" fill="#9fb0bd"/><rect x="61.2" y="93.5" width="1" height="1" fill="#9fb0bd"/><rect x="52.1" y="91.2" width="1" height="1" fill="#9fb0bd"/><rect x="55.9" y="83.4" width="1" height="1" fill="#9fb0bd"/><rect x="54.5" y="90.8" width="1" height="1" fill="#9fb0bd"/><rect x="61.5" y="82.1" width="1" height="1" fill="#9fb0bd"/><rect x="58.4" y="82.1" width="1" height="1" fill="#9fb0bd"/><rect x="59.6" y="85.6" width="1" height="1" fill="#9fb0bd"/>
 <circle cx="57" cy="17.7" r="9" fill="#5584c8"/>
 <circle cx="92" cy="52.6" r="9" fill="#7e9a6d"/>
 <circle cx="57" cy="52.6" r="9.5" fill="#b35f59"/>
 <text x="57" y="21.8" fill="#1a1f2a" font-size="11" font-weight="bold" font-family="Liberation Sans" text-anchor="middle">Z</text>
 <text x="57" y="56.6" fill="#141414" font-size="11" font-weight="bold" font-family="Liberation Sans" text-anchor="middle">X</text>
 <text x="92" y="56.6" fill="#1c2814" font-size="11" font-weight="bold" font-family="Liberation Sans" text-anchor="middle">Y</text>
</svg>
<!-- nav buttons -->
<svg class="a" style="left:1010px;top:150px" width="34" height="134">
 <circle cx="17" cy="17.6" r="15" fill="#46525c" opacity=".9"/>
 <circle cx="17" cy="50.6" r="15" fill="#44505a" opacity=".9"/>
 <circle cx="17" cy="83.7" r="15" fill="#434f58" opacity=".9"/>
 <circle cx="17" cy="116.7" r="15" fill="#414c55" opacity=".9"/>
 <circle cx="19.5" cy="15" r="5.6" fill="none" stroke="#e8e8e8" stroke-width="2"/>
 <path d="M18 14.8 H21 M19.5 13.3 V16.3" stroke="#e8e8e8" stroke-width="1"/>
 <path d="M15.5 19.5 L9.5 25" stroke="#e8e8e8" stroke-width="2" stroke-linecap="round"/>
 <path d="M10.5 52 C12 52 14 54 15 55.5 L15 43 C15 41.5 16.8 41.5 16.8 43 L17 48 L17.2 42 C17.2 40.5 19 40.5 19 42 L19.2 48 L19.6 42.8 C19.7 41.5 21.3 41.6 21.3 43 L21.3 49 L22.3 46 C22.7 44.8 24 45.2 23.8 46.5 L22.5 54 C22 57 20 59 17 59 C14 59 12.5 56.5 10.5 52 Z" fill="#ececec"/>
 <circle cx="13.5" cy="80" r="3.3" fill="#e8e8e8"/><circle cx="21" cy="79.5" r="3.7" fill="#e8e8e8"/>
 <rect x="12" y="84" width="11" height="6" fill="#e8e8e8"/><path d="M23 87 L27 84.5 V89.5Z" fill="#e8e8e8"/><rect x="9.5" y="85.5" width="2" height="3" fill="#e8e8e8"/>
 <rect x="8.5" y="108" width="17" height="17" fill="none" stroke="#eeeeee" stroke-width="1.3"/>
 <path d="M14.2 108 V125 M19.8 108 V125 M8.5 113.7 H25.5 M8.5 119.3 H25.5" stroke="#eeeeee" stroke-width="1.1"/>
</svg>
<div class="a" style="left:1043px;top:69px;width:12px;height:16px;background:#5f6e79;border-radius:4px 0 0 4px"></div>
<svg class="a" style="left:1044px;top:72px" width="8" height="10"><path d="M6 1 L2 5 L6 9" stroke="#c8ccd0" stroke-width="1.2" fill="none"/></svg>
</div><svg width="0" height="0" style="position:absolute">
<defs>
 <symbol id="bone" viewBox="0 0 16 16"><g fill="#8fb57c" stroke="#2a2a2a" stroke-width="0.6" paint-order="stroke"><circle cx="2.2" cy="4.5" r="2.2"/><circle cx="5.3" cy="1.9" r="2.1"/><circle cx="13.8" cy="11.1" r="2.1"/><circle cx="11" cy="13.9" r="2.1"/></g><path d="M3.6 3.4 L12.4 12.4" stroke="#8fb57c" stroke-width="3.6"/></symbol>
 <symbol id="eye" viewBox="0 0 16 16"><path d="M1 8 Q8 0.5 15 8 Q8 15.5 1 8Z" fill="#e8e8e8"/><circle cx="8" cy="8" r="3.6" fill="#3b3b3b"/><circle cx="8" cy="8" r="1.8" fill="#e8e8e8"/></symbol>
 <symbol id="cam" viewBox="0 0 16 16"><path d="M1.5 4.5 H4.5 L6 2.5 H10 L11.5 4.5 H14.5 V13.5 H1.5Z" fill="#e8e8e8"/><circle cx="8" cy="9" r="3.5" fill="#3b3b3b"/><circle cx="8" cy="9" r="2.2" fill="#e8e8e8"/></symbol>
 <symbol id="tri" viewBox="0 0 8 8"><path d="M0.5 1.5 H7.5 L4 7Z" fill="#d8d8d8"/></symbol>
 <symbol id="trir" viewBox="0 0 8 8"><path d="M1.5 0.5 V7.5 L7 4Z" fill="#d8d8d8"/></symbol>
 <symbol id="box" viewBox="0 0 16 16"><rect x="1" y="2" width="14" height="3.5" fill="currentColor"/><path d="M2 6.5 H14 V14 H2Z M6 8 V9.5 H10 V8Z" fill="currentColor" fill-rule="evenodd"/></symbol>
 <symbol id="runner" viewBox="0 0 16 16"><g fill="none" stroke="currentColor" stroke-width="1.1" stroke-linecap="round"><path d="M1 0.8 L3.5 3.5 L6.5 3 L10.5 6.5"/><path d="M7 3.2 V9 C5 10 3.5 11.5 3 15"/><path d="M7 9 L10.5 12.5 L13.5 13"/></g><circle cx="7.2" cy="1.6" r="1.4" fill="currentColor"/></symbol>
 <symbol id="bonecoll" viewBox="0 0 16 16"><g fill="#d6d2cc"><circle cx="2.6" cy="4.4" r="2.2"/><circle cx="4.6" cy="2.4" r="2.2"/><circle cx="13.4" cy="11.6" r="2.2"/><circle cx="11.4" cy="13.6" r="2.2"/></g><path d="M3.8 3.6 L12.2 12.4" stroke="#d6d2cc" stroke-width="3.4"/><g fill="none" stroke="#c8c4be" stroke-width="1"><path d="M9.5 2.5 C10 0.8 12.2 0.8 12.6 2.2 C14.2 2 15 4 13.6 5 C14.2 6.2 13 7.4 11.8 7"/><path d="M6.5 13.5 C6 15.2 3.8 15.2 3.4 13.8 C1.8 14 1 12 2.4 11 C1.8 9.8 3 8.6 4.2 9"/></g></symbol>
</defs></svg>
<div id="ol" class="a" style="left:1055px;top:0;width:445px;height:425px;background:#383838;overflow:hidden;border-radius:0 0 0 5px">
 <div class="a" style="left:0;top:0;width:445px;height:25px;background:#444444"></div>
 <div class="a" style="left:0;top:25px;width:445px;height:23px;background:#353535"></div>
 <div class="a" style="left:0;top:48px;width:445px;height:22px;background:#393939"></div>
 <div class="a" style="left:0;top:70px;width:445px;height:22px;background:#3d5589"></div>
 <div class="a" style="left:0;top:92px;width:445px;height:22px;background:#393939"></div>
 <div class="a" style="left:0;top:114px;width:445px;height:22px;background:#353535"></div>
 <div class="a" style="left:0;top:136px;width:445px;height:22px;background:#393939"></div>
 <div class="a" style="left:0;top:158px;width:445px;height:22px;background:#353535"></div>
 <div class="a" style="left:0;top:180px;width:445px;height:22px;background:#393939"></div>
 <div class="a" style="left:0;top:202px;width:445px;height:22px;background:#353535"></div>
 <div class="a" style="left:0;top:224px;width:445px;height:22px;background:#393939"></div>
 <div class="a" style="left:0;top:246px;width:445px;height:22px;background:#353535"></div>
 <div class="a" style="left:0;top:268px;width:445px;height:22px;background:#393939"></div>
 <div class="a" style="left:0;top:290px;width:445px;height:22px;background:#353535"></div>
 <div class="a" style="left:0;top:312px;width:445px;height:22px;background:#393939"></div>
 <div class="a" style="left:0;top:334px;width:445px;height:22px;background:#353535"></div>
 <div class="a" style="left:0;top:356px;width:445px;height:22px;background:#393939"></div>
 <div class="a" style="left:0;top:378px;width:445px;height:22px;background:#353535"></div>
 <div class="a" style="left:0;top:400px;width:445px;height:25px;background:#393939"></div>
</div>
<!-- outliner header -->
<div class="btn dk" style="left:1064px;top:1px;width:33px;height:20px"></div>
<svg class="a" style="left:1064px;top:0px" width="33" height="21">
 <rect x="4.2" y="3" width="6" height="3" fill="#e8ecec"/>
 <path d="M7.8 6 V17.4 H10.8 M7.8 11.1 H10.8" fill="none" stroke="#b8b4b0" stroke-width="1"/>
 <rect x="12.3" y="9.9" width="7.8" height="3" fill="#e8ecec"/><rect x="12.3" y="15" width="7.8" height="3.9" fill="#e8ecec"/>
 <path d="M23 10.3 L26.5 13.8 L30 10.3" stroke="#f0f0f0" stroke-width="1.2" fill="none"/>
</svg>
<div class="btn dk" style="left:1104px;top:1px;width:33px;height:20px"></div>
<svg class="a" style="left:1104px;top:0px" width="33" height="21">
 <path d="M4.5 7.5 V18 H15.8" fill="none" stroke="#a8a4a0" stroke-width="1.1"/>
 <path d="M7.1 5.5 V15.9 H17.9" fill="none" stroke="#c0bcb8" stroke-width="1.1"/>
 <rect x="9.5" y="3.6" width="10" height="9.6" fill="#1e1e1e" stroke="#eef0f0" stroke-width="1.2"/>
 <path d="M10.2 13 L12.8 7.5 L15.8 13Z" fill="#e8ecec"/><circle cx="17" cy="6" r="1.1" fill="#e8ecec"/>
 <path d="M23 10.3 L26.5 13.8 L30 10.3" stroke="#f0f0f0" stroke-width="1.2" fill="none"/>
</svg>
<div class="a" style="left:1206px;top:1px;width:125px;height:20px;background:#1d1d1d;border-radius:3px"></div>
<svg class="a" style="left:1208px;top:2px" width="20" height="18">
 <circle cx="10.5" cy="7" r="4.6" fill="none" stroke="#e0e0e0" stroke-width="1.3"/>
 <path d="M7 10.5 L2.5 15" stroke="#e0e0e0" stroke-width="1.5" stroke-linecap="round"/>
</svg>
<div class="btn dk" style="left:1435px;top:1px;width:33px;height:20px"></div>
<svg class="a" style="left:1435px;top:1px" width="33" height="20">
 <path d="M3.5 3.5 H16.5 L11.5 10 V17.5 L8.5 15 V10Z" fill="none" stroke="#e8e8e8" stroke-width="1.2" stroke-linejoin="round"/>
 <path d="M22.5 9.5 L25.5 12.5 L28.5 9.5" stroke="#f0f0f0" stroke-width="1.2" fill="none"/>
</svg>
<div class="btn" style="left:1475px;top:1px;width:20px;height:20px;background:#565656"></div>
<svg class="a" style="left:1475px;top:0px" width="21" height="21">
 <path d="M3 9 V5.5 H10" fill="none" stroke="#bdbab6" stroke-width="1.2"/><path d="M3 8.5 H10" stroke="#bdbab6" stroke-width="1.2"/>
 <path d="M4 9 V18.5 H13.5 V12" fill="none" stroke="#bdbab6" stroke-width="1.2"/><rect x="6.5" y="12.3" width="3.5" height="1.3" fill="#bdbab6"/>
 <circle cx="14.1" cy="6.9" r="4.1" fill="#f2f2f2"/><path d="M14.1 4.3 V9.5 M11.5 6.9 H16.7" stroke="#444" stroke-width="1.2"/>
</svg>
<!-- outliner rows -->
<svg class="a" style="left:1079px;top:29px;color:#c7c7c7" width="17" height="16"><use href="#box"/></svg>
<div class="t" style="left:1103px;top:30px;color:#dadada">Scene Collection</div>

<svg class="a" style="left:1083px;top:55px" width="8" height="8"><use href="#tri"/></svg>
<div class="a" style="left:1099px;top:49px;width:22px;height:20px;background:#585858;border-radius:5px;border:1px solid #6c6a6a"></div>
<svg class="a" style="left:1102px;top:51px;color:#d9c7dc" width="16" height="16"><use href="#box"/></svg>
<div class="t" style="left:1125px;top:52px;color:#dadada">Collection</div>
<svg class="a" style="left:1433px;top:51px" width="15" height="15"><rect x="1" y="1" width="13" height="13" rx="2" fill="#f0f0f0"/><path d="M3.5 7.5 L6 10 L11 4.5" stroke="#222" stroke-width="2" fill="none"/></svg>
<svg class="a" style="left:1453px;top:51px" width="17" height="16"><use href="#eye"/></svg>
<svg class="a" style="left:1475px;top:51px" width="17" height="16"><use href="#cam"/></svg>

<svg class="a" style="left:1057px;top:73px" width="18" height="17"><g fill="none" stroke="#c9c4bb" stroke-width="1"><circle cx="3" cy="3.5" r="1.8"/><circle cx="3" cy="14" r="1.8"/><circle cx="14" cy="14" r="1.8"/><path d="M3 5.3 V12.2 M4.8 14 H12.2 M4.8 3.5 H11 M14 7 V12.2" stroke="#87aec8"/></g><rect x="11.5" y="1" width="5" height="5" fill="#e8e8e8"/></svg>
<div class="a" style="left:1087px;top:77px;width:1px;height:279px;background:#7a7a7a"></div>
<div class="a" style="left:1109px;top:97px;width:1px;height:259px;background:repeating-linear-gradient(to bottom,#8a8a8a 0 4px,transparent 4px 9px)"></div>
<svg class="a" style="left:1106px;top:77px" width="8" height="8"><use href="#tri"/></svg>
<div class="a" style="left:1121px;top:71px;width:22px;height:20px;background:#5a6e93;border-radius:5px;border:1px solid #6a82a8"></div>
<svg class="a" style="left:1124px;top:73px" width="16" height="16"><g stroke="#a39d94" stroke-width="3" stroke-linecap="round" fill="none"><path d="M2.5 4 H13"/><path d="M8 4 V9 L4.5 14"/><path d="M8 9 L11.5 14"/></g><circle cx="9.5" cy="2.8" r="1" fill="#6a82a8"/></svg>
<div class="t" style="left:1147px;top:74px;color:#e4a890">Armature</div>
<svg class="a" style="left:1453px;top:73px" width="17" height="16"><use href="#eye"/></svg>
<svg class="a" style="left:1475px;top:73px" width="17" height="16"><use href="#cam"/></svg>

<svg class="a" style="left:1146px;top:95px;color:#8fb878" width="17" height="16"><use href="#runner"/></svg>
<div class="t" style="left:1169px;top:96px;color:#dadada">Pose</div>

<svg class="a" style="left:1128px;top:121px" width="8" height="8"><use href="#tri"/></svg>
<div class="a" style="left:1143px;top:115px;width:22px;height:20px;background:#303b41;border-radius:5px;border:1px solid #4a5f6c"></div>
<svg class="a" style="left:1146px;top:117px;color:#8fb878" width="16" height="16"><use href="#runner"/></svg>
<div class="t" style="left:1169px;top:118px;color:#dadada">Armature</div>

<svg class="a" style="left:1150px;top:143px" width="8" height="8"><use href="#tri"/></svg>
<svg class="a" style="left:1168px;top:139px" width="16" height="16"><use href="#bone"/></svg>
<div class="t" style="left:1191px;top:140px;color:#dadada">root</div>

<svg class="a" style="left:1190px;top:161px" width="16" height="16"><use href="#bone"/></svg>
<div class="t" style="left:1213px;top:162px;color:#dadada">def_body</div>

<svg class="a" style="left:1172px;top:187px" width="8" height="8"><use href="#tri"/></svg>
<svg class="a" style="left:1190px;top:183px" width="16" height="16"><use href="#bone"/></svg>
<div class="t" style="left:1213px;top:184px;color:#dadada">tgt_cog</div>

<svg class="a" style="left:1212px;top:205px" width="16" height="16"><use href="#bone"/></svg>
<div class="t" style="left:1235px;top:206px;color:#dadada">tgt_stretch-top</div>

<svg class="a" style="left:1194px;top:231px" width="8" height="8"><use href="#tri"/></svg>
<svg class="a" style="left:1212px;top:227px" width="16" height="16"><use href="#bone"/></svg>
<div class="t" style="left:1235px;top:228px;color:#dadada">tgt_stretch-bottom</div>

<svg class="a" style="left:1216px;top:253px" width="8" height="8"><use href="#tri"/></svg>
<svg class="a" style="left:1234px;top:249px" width="16" height="16"><use href="#bone"/></svg>
<div class="t" style="left:1257px;top:250px;color:#dadada">mch_stretch</div>

<svg class="a" style="left:1256px;top:271px" width="16" height="16"><use href="#bone"/></svg>
<div class="t" style="left:1279px;top:272px;color:#dadada">tgt_body</div>

<svg class="a" style="left:1168px;top:293px" width="16" height="16"><use href="#bone"/></svg>
<div class="t" style="left:1191px;top:294px;color:#dadada">ctrl_root</div>

<svg class="a" style="left:1150px;top:319px" width="8" height="8"><use href="#trir"/></svg>
<svg class="a" style="left:1168px;top:315px" width="16" height="16"><use href="#bonecoll"/></svg>
<div class="t" style="left:1191px;top:316px;color:#dadada">Bone Collections</div>
<div class="a" style="left:1309px;top:313px;width:22px;height:20px;background:#303d47;border-radius:5px;border:1px solid #4a6070"></div>
<svg class="a" style="left:1311px;top:315px" width="16" height="16"><use href="#bonecoll"/></svg>
<div class="t" style="left:1326px;top:319px;font-size:12px;line-height:14px;color:#e0e0e0">5</div>

<svg class="a" style="left:1128px;top:341px" width="8" height="8"><use href="#trir"/></svg>
<svg class="a" style="left:1146px;top:337px" width="17" height="17"><path d="M2 2.5 H15 L8.5 15Z" fill="none" stroke="#c0504c" stroke-width="2.4" stroke-linejoin="round"/></svg>
<div class="t" style="left:1169px;top:338px;color:#dadada">Sphere</div>
<svg class="a" style="left:1234px;top:337px" width="17" height="17"><path d="M1.8 13.8 L7.2 8.6 C6.2 6 7.6 2.8 10.8 2.2 L9.6 4.8 L11.6 6.8 L14.4 5.6 C13.8 8.8 10.6 10.2 8 9.2 L3 14.6 C2.4 15.2 1.2 14.6 1.8 13.8Z" fill="none" stroke="#5e9be6" stroke-width="1.2" stroke-linejoin="round"/></svg>
<svg class="a" style="left:1256px;top:337px" width="17" height="17"><g fill="#c8c4be"><rect x="1" y="5" width="4" height="3.5"/><rect x="5.5" y="5" width="4" height="3.5"/><rect x="1" y="9" width="4" height="3.5"/><rect x="5.5" y="9" width="4" height="3.5"/><rect x="5.5" y="13" width="4" height="3.5"/></g><g fill="none" stroke="#b8b4ae" stroke-width="0.9"><rect x="5.9" y="1.2" width="3.2" height="3.2"/><rect x="10.4" y="5.4" width="3.2" height="2.8"/><rect x="10.4" y="9.4" width="3.2" height="2.8"/></g></svg>
<svg class="a" style="left:1279px;top:337px" width="17" height="17"><path d="M2.5 2.5 H14.5 L8.5 14.5Z" fill="none" stroke="#8fb878" stroke-width="1.2"/><g fill="#39393a" stroke="#8fb878" stroke-width="1.1"><rect x="0.8" y="0.8" width="3.4" height="3.4"/><rect x="12.8" y="0.8" width="3.4" height="3.4"/><rect x="6.8" y="12.8" width="3.4" height="3.4"/></g></svg>
<svg class="a" style="left:1453px;top:337px" width="17" height="16"><use href="#eye"/></svg>
<svg class="a" style="left:1475px;top:337px" width="17" height="16"><use href="#cam"/></svg>
<!-- separators -->
<div class="a" style="left:1052px;top:0;width:3px;height:1069px;background:#1f2022"></div>
<div class="a" style="left:1055px;top:425px;width:445px;height:3px;background:#1f2022"></div>
<div id="pr" class="a" style="left:1055px;top:428px;width:445px;height:641px;background:#414141;overflow:hidden;border-radius:5px 0 0 0">
 <div class="a" style="left:0;top:0;width:445px;height:27px;background:#474746"></div>
 <div class="a" style="left:0;top:27px;width:30px;height:614px;background:#232728"></div>
</div>
<!-- props header -->
<div class="btn dk" style="left:1064px;top:431px;width:33px;height:20px"></div>
<svg class="a" style="left:1064px;top:431px" width="33" height="20">
 <rect x="4.5" y="2.5" width="15" height="6" rx="3" fill="#e6eaea"/><rect x="12" y="4" width="6" height="3" rx="1.5" fill="#2b2b2b"/>
 <rect x="4.5" y="11.5" width="15" height="6" rx="3" fill="#e6eaea"/><rect x="15" y="13" width="3" height="3" rx="1.5" fill="#2b2b2b"/>
 <path d="M23.5 9.5 L26.5 12.5 L29.5 9.5" stroke="#f0f0f0" stroke-width="1.2" fill="none"/>
</svg>
<div class="a" style="left:1219px;top:431px;width:125px;height:20px;background:#1d1d1d;border-radius:3px"></div>
<svg class="a" style="left:1221px;top:432px" width="20" height="18">
 <circle cx="10.5" cy="7" r="4.6" fill="none" stroke="#e0e0e0" stroke-width="1.3"/>
 <path d="M7 10.5 L2.5 15" stroke="#e0e0e0" stroke-width="1.5" stroke-linecap="round"/>
</svg>
<div class="btn dk" style="left:1475px;top:431px;width:20px;height:20px"></div>
<svg class="a" style="left:1475px;top:431px" width="20" height="20"><path d="M6.5 8.5 L10 12 L13.5 8.5" stroke="#f0f0f0" stroke-width="1.3" fill="none"/></svg>
<!-- nav tabs -->
<div class="a" style="left:1056px;top:463px;width:29px;height:29px;background:#2e2d2c;border-radius:5px 0 0 5px"></div>
<div class="a" style="left:1056px;top:501px;width:29px;height:149px;background:#2e2d2c;border-radius:5px 0 0 5px"></div>
<div class="a" style="left:1056px;top:659px;width:29px;height:29px;background:#2e2d2c;border-radius:5px 0 0 5px"></div>
<div class="a" style="left:1056px;top:697px;width:29px;height:149px;background:#2e2d2c;border-radius:5px 0 0 5px"></div>
<div class="a" style="left:1057px;top:788px;width:28px;height:28px;background:#474747;border-radius:5px 0 0 5px"></div>
<div class="a" style="left:1056px;top:530px;width:3px;height:1px;background:#232728"></div>
<div class="a" style="left:1056px;top:560px;width:3px;height:1px;background:#232728"></div>
<div class="a" style="left:1056px;top:590px;width:3px;height:1px;background:#232728"></div>
<div class="a" style="left:1056px;top:620px;width:3px;height:1px;background:#232728"></div>
<div class="a" style="left:1056px;top:726px;width:3px;height:1px;background:#232728"></div>
<div class="a" style="left:1056px;top:756px;width:3px;height:1px;background:#232728"></div>
<div class="a" style="left:1056px;top:786px;width:3px;height:1px;background:#232728"></div>
<svg class="a" style="left:1063px;top:469px" width="17" height="17" viewBox="0 0 17 17">
 <path d="M3.8 0.5 V7" stroke="#cfcfcf" stroke-width="1.3"/><path d="M1.5 8 H6" stroke="#cfcfcf" stroke-width="1.1"/><circle cx="3.8" cy="12.3" r="3.3" fill="#cfcfcf"/>
 <path d="M10.3 6.5 C8.3 5.5 8 2.5 9.5 0.8 V4 L11.3 5 L13.1 4 V0.8 C14.6 2.5 14.3 5.5 12.3 6.5 V15.3 C12.3 16.5 10.3 16.5 10.3 15.3Z" fill="#cfcfcf"/>
</svg>
<svg class="a" style="left:1063px;top:507px" width="17" height="16" viewBox="0 0 17 16">
 <rect x="0.5" y="3" width="16" height="12" rx="1.5" fill="#cfcfcf"/><rect x="4" y="1" width="5" height="2.5" rx=".8" fill="#cfcfcf"/><rect x="13" y="0.6" width="2.5" height="1.2" fill="#cfcfcf"/>
 <path d="M3 6.5 H12 M3 9 H12 M3 11.5 H12" stroke="#2e2d2c" stroke-width="1"/><rect x="2.5" y="5" width="10" height="8.5" fill="none" stroke="#2e2d2c" stroke-width=".8"/>
 <circle cx="14.5" cy="7" r="1" fill="#2e2d2c"/><circle cx="14.5" cy="11.5" r="1" fill="#2e2d2c"/>
</svg>
<svg class="a" style="left:1063px;top:538px" width="17" height="16" viewBox="0 0 17 16">
 <path d="M0.5 6.5 V2.5 C0.5 1.5 1 1 2 1 H15 C16 1 16.5 1.5 16.5 2.5 V6.5 H14 V4.5 H3 V6.5Z" fill="#cfcfcf"/>
 <rect x="4" y="5" width="9" height="10.5" fill="#bdbdbd"/><path d="M5.5 13.5 L8 10 L10.5 13.5Z" fill="#2e2d2c"/><circle cx="11" cy="7" r=".9" fill="#2e2d2c"/>
</svg>
<svg class="a" style="left:1063px;top:567px" width="17" height="17" viewBox="0 0 17 17">
 <path d="M1 6 V16 H12" fill="none" stroke="#8f8f8f" stroke-width="1.3"/><path d="M3 4 V14 H14" fill="none" stroke="#b0b0b0" stroke-width="1.3"/>
 <rect x="5" y="1" width="11" height="11" fill="#d0d0d0"/><rect x="6.2" y="2.2" width="8.6" height="8.6" fill="#2e2d2c"/><path d="M6.5 10.5 L9.5 5 L12.5 10.5Z" fill="#d0d0d0"/><circle cx="13" cy="4" r="1.1" fill="#d0d0d0"/>
</svg>
<svg class="a" style="left:1063px;top:597px" width="17" height="17" viewBox="0 0 17 17">
 <path d="M5.5 1.5 L1 11 C1 12.5 2.5 13 4 12.5 L8.5 10Z" fill="#d0d0d0"/><circle cx="14" cy="3" r="2.3" fill="#d0d0d0"/>
 <circle cx="10.5" cy="11.5" r="4.5" fill="#2e2d2c" stroke="#d0d0d0" stroke-width="1.3"/><path d="M8.5 11.5 A2 2 0 0 1 10.5 9.5" fill="none" stroke="#d0d0d0" stroke-width="1"/>
</svg>
<svg class="a" style="left:1063px;top:628px" width="17" height="17" viewBox="0 0 17 17">
 <circle cx="8" cy="9" r="6.5" fill="none" stroke="#c45a55" stroke-width="1.2"/><path d="M15.5 1.5 L13 4 M3.5 13.5 L1 16" stroke="#c45a55" stroke-width="1"/>
 <path d="M3 6 C5 5 6 7 7 8 C6.5 9 5 9 5 10.5 C6 12 8 11 9 12.5 L10 15 M8 3 C9 4 10 4 10.5 6 C11 7.5 13 7 14 8" fill="none" stroke="#c45a55" stroke-width="2"/>
</svg>
<svg class="a" style="left:1063px;top:666px" width="17" height="17" viewBox="0 0 17 17">
 <rect x="1" y="1.5" width="15" height="3.5" fill="none" stroke="#d0d0d0" stroke-width="1.2"/><path d="M2 5 V15.5 H15 V5" fill="none" stroke="#d0d0d0" stroke-width="1.2"/><rect x="6.5" y="7.5" width="4" height="1.6" fill="#d0d0d0"/>
</svg>
<svg class="a" style="left:1063px;top:704px" width="17" height="17" viewBox="0 0 17 17">
 <rect x="4" y="4" width="9" height="9" fill="#c45a55"/><path d="M1 4.5 V1 H4.5 M12.5 1 H16 V4.5" fill="none" stroke="#b05a55" stroke-width="1"/><path d="M16 12.5 V16 H12.5 M4.5 16 H1 V12.5" fill="none" stroke="#909090" stroke-width="1"/>
</svg>
<svg class="a" style="left:1063px;top:734px" width="17" height="17" viewBox="0 0 17 17">
 <path d="M11.5 3 A7 7 0 1 0 15 12" fill="none" stroke="#5b8fd4" stroke-width="1.2"/><circle cx="8" cy="9" r="3.3" fill="#5b8fd4"/><circle cx="14" cy="3" r="2.3" fill="#5b8fd4"/>
</svg>
<svg class="a" style="left:1063px;top:763px" width="17" height="17" viewBox="0 0 17 17">
 <path d="M2.5 14.5 C0.5 12 1.5 8 5 5 C9 1.5 14 0.5 15.5 2 C17 3.5 15 8 12 11.5 C9 15 4.5 16.5 2.5 14.5Z" fill="none" stroke="#5b8fd4" stroke-width="1.2"/>
 <circle cx="7" cy="10.5" r="3.8" fill="none" stroke="#5b8fd4" stroke-width="1.2"/><rect x="5.3" y="8.8" width="3.4" height="3.4" fill="#5b8fd4"/><circle cx="13.2" cy="3.8" r=".9" fill="#5b8fd4"/>
</svg>
<svg class="a" style="left:1063px;top:793px" width="17" height="17" viewBox="0 0 17 17">
 <g fill="none" stroke="#8db57a" stroke-width="1.2" stroke-linecap="round"><path d="M1 1.5 L4.5 5 H8.5 L13.5 9"/><path d="M7.5 5.5 L6.5 11 L3 15.5"/><path d="M6.5 11 L11.5 12 L15 15.5"/></g><rect x="8" y="1" width="3.5" height="3.5" fill="#8db57a"/>
</svg>
<svg class="a" style="left:1062px;top:822px" width="19" height="19"><use href="#bone" width="19" height="19"/></svg>
<!-- breadcrumb -->
<svg class="a" style="left:1095px;top:465px" width="18" height="18"><rect x="4.5" y="4.5" width="9" height="9" fill="#d8d8d8"/><path d="M1.5 5 V1.5 H5 M13 1.5 H16.5 V5 M16.5 13 V16.5 H13 M5 16.5 H1.5 V13" fill="none" stroke="#a8a8a8" stroke-width="1"/></svg>
<div class="t" style="left:1122px;top:466px;color:#dcdcdc">Armature</div>
<svg class="a" style="left:1191px;top:467px" width="10" height="14"><path d="M2.5 2 L7 6.5 L2.5 11" stroke="#d0d0d0" stroke-width="1.2" fill="none"/></svg>
<svg class="a" style="left:1210px;top:465px;color:#d8d8d8" width="17" height="17"><use href="#runner"/></svg>
<div class="t" style="left:1236px;top:466px;color:#dcdcdc">Armature</div>
<svg class="a" style="left:1477px;top:465px" width="18" height="18"><path d="M10 1.5 L16.5 8 M11.5 3 L8 6.5 L4.5 6.5 L11.5 13.5 V10 L15 6.5" fill="none" stroke="#9a9a9a" stroke-width="1.2"/><path d="M7 10.5 L1.5 16" stroke="#9a9a9a" stroke-width="1.2"/></svg>
<!-- armature field -->
<div class="a" style="left:1094px;top:502px;width:34px;height:20px;background:#2c2c2c;border-radius:4px 0 0 4px"></div>
<svg class="a" style="left:1098px;top:503px;color:#e0e0e0" width="17" height="18" viewBox="0 0 16 16" preserveAspectRatio="none"><use href="#runner"/></svg>
<svg class="a" style="left:1116px;top:507px" width="10" height="10"><path d="M1.5 3.5 L4.5 6.5 L7.5 3.5" stroke="#e0e0e0" stroke-width="1.2" fill="none"/></svg>
<div class="a" style="left:1128px;top:502px;width:346px;height:20px;background:#1e1f20"></div>
<div class="t" style="left:1136px;top:504px;color:#e6e6e6">Armature</div>
<div class="a" style="left:1475px;top:502px;width:21px;height:20px;background:#575757;border-radius:0 4px 4px 0"></div>
<svg class="a" style="left:1477px;top:503px" width="17" height="17"><path d="M8.5 2 L14 4 V8.5 C14 12 11.5 14 8.5 15.5 C5.5 14 3 12 3 8.5 V4Z" fill="none" stroke="#cfcfcf" stroke-width="1.2"/></svg>
<!-- Pose panel -->
<svg class="a" style="left:1101px;top:541px" width="12" height="10"><path d="M1.5 2.5 L5.5 6.5 L9.5 2.5" stroke="#bdbdbd" stroke-width="1.1" fill="none"/></svg>
<div class="t" style="left:1117px;top:540px;color:#d6d6d6;font-size:14px">Pose</div>
<svg class="a" style="left:1475px;top:544px" width="12" height="6"><g fill="#b0b0b0"><rect x="0" y="0" width="1.3" height="1.3"/><rect x="3" y="0" width="1.3" height="1.3"/><rect x="6" y="0" width="1.3" height="1.3"/><rect x="9" y="0" width="1.3" height="1.3"/><rect x="0" y="3" width="1.3" height="1.3"/><rect x="3" y="3" width="1.3" height="1.3"/><rect x="6" y="3" width="1.3" height="1.3"/><rect x="9" y="3" width="1.3" height="1.3"/></g></svg>
<div class="a" style="left:1093px;top:560px;width:402px;height:38px;background:#373635;border-radius:5px"></div>
<div class="a" style="left:1102px;top:569px;width:191px;height:20px;background:#5079b8;border-radius:4px 0 0 4px"></div>
<div class="a" style="left:1294px;top:569px;width:192px;height:20px;background:#5a5a5a;border-radius:0 4px 4px 0"></div>
<div class="t" style="left:1102px;top:571px;width:191px;text-align:center;color:#f4f4f4">Pose Position</div>
<div class="t" style="left:1294px;top:571px;width:192px;text-align:center;color:#e6e6e6">Rest Position</div>
<!-- Bone collections -->
<svg class="a" style="left:1101px;top:608px" width="12" height="10"><path d="M1.5 2.5 L5.5 6.5 L9.5 2.5" stroke="#bdbdbd" stroke-width="1.1" fill="none"/></svg>
<div class="t" style="left:1117px;top:607px;color:#d6d6d6;font-size:14px">Bone Collections</div>
<svg class="a" style="left:1475px;top:611px" width="12" height="6"><g fill="#b0b0b0"><rect x="0" y="0" width="1.3" height="1.3"/><rect x="3" y="0" width="1.3" height="1.3"/><rect x="6" y="0" width="1.3" height="1.3"/><rect x="9" y="0" width="1.3" height="1.3"/><rect x="0" y="3" width="1.3" height="1.3"/><rect x="3" y="3" width="1.3" height="1.3"/><rect x="6" y="3" width="1.3" height="1.3"/><rect x="9" y="3" width="1.3" height="1.3"/></g></svg>
<div class="a" style="left:1093px;top:627px;width:402px;height:293px;background:#373635;border-radius:0 0 5px 5px"></div>
<div class="a" style="left:1101px;top:635px;width:356px;height:175px;background:#2c2c2c;border:1px solid #3e3e3e;border-radius:5px"></div>
<div class="a" style="left:1107px;top:641px;width:345px;height:20px;background:#4a74b5;border-radius:4px"></div>
<div class="t" style="left:1135px;top:643px;color:#f4f4f4">root</div>
<svg class="a" style="left:1432px;top:643px" width="17" height="16"><path d="M1 8 Q8 0.5 15 8 Q8 15.5 1 8Z" fill="#f2f2f2"/><circle cx="8" cy="8" r="3.4" fill="#4a74b5"/><circle cx="8" cy="8" r="1.7" fill="#f2f2f2"/></svg>
<div class="t" style="left:1135px;top:665px;color:#dcdcdc">def</div>
<div class="t" style="left:1135px;top:687px;color:#dcdcdc">tgt</div>
<div class="t" style="left:1135px;top:709px;color:#dcdcdc">mch</div>
<div class="a" style="left:1117px;top:737px;width:4px;height:4px;border-radius:2px;background:#e8e8e8"></div>
<div class="t" style="left:1135px;top:731px;color:#dcdcdc">ctrl</div>
<svg class="a" style="left:1432px;top:667px" width="17" height="90"><g fill="none" stroke="#d0d0d0" stroke-width="1.1"><path d="M1.5 6 Q8.5 13 15.5 6"/><path d="M1.5 28 Q8.5 35 15.5 28"/><path d="M1.5 50 Q8.5 57 15.5 50"/><path d="M1.5 72 Q8.5 79 15.5 72"/></g></svg>
<svg class="a" style="left:1113px;top:794px" width="9" height="9"><path d="M1.5 1 V8 L7.5 4.5Z" fill="#c8c8c8"/></svg>
<svg class="a" style="left:1284px;top:796px" width="12" height="6"><g fill="#b0b0b0"><rect x="0" y="0" width="1.3" height="1.3"/><rect x="3" y="0" width="1.3" height="1.3"/><rect x="6" y="0" width="1.3" height="1.3"/><rect x="9" y="0" width="1.3" height="1.3"/><rect x="0" y="3" width="1.3" height="1.3"/><rect x="3" y="3" width="1.3" height="1.3"/><rect x="6" y="3" width="1.3" height="1.3"/><rect x="9" y="3" width="1.3" height="1.3"/></g></svg>
<!-- side buttons -->
<div class="a" style="left:1466px;top:636px;width:20px;height:42px;background:#575757;border-radius:4px"></div>
<div class="a" style="left:1466px;top:656.5px;width:20px;height:1px;background:#3f3f3f"></div>
<svg class="a" style="left:1466px;top:636px" width="20" height="42"><path d="M10 4.5 V15.5 M4.5 10 H15.5 M4.5 31.5 H15.5" stroke="#e0e0e0" stroke-width="1.2"/></svg>
<div class="a" style="left:1466px;top:686px;width:20px;height:42px;background:#575757;border-radius:4px"></div>
<div class="a" style="left:1466px;top:706.5px;width:20px;height:1px;background:#3f3f3f"></div>
<svg class="a" style="left:1466px;top:686px" width="20" height="42"><path d="M10 5.5 L15 12.5 H5Z M5 29 H15 L10 36Z" fill="#e6e6e6"/></svg>
<div class="a" style="left:1466px;top:736px;width:20px;height:20px;background:#2c2c2c;border-radius:4px;border:1px solid #393939"></div>
<svg class="a" style="left:1466px;top:736px" width="20" height="20"><path d="M5.5 8 L10 12.5 L14.5 8" stroke="#e0e0e0" stroke-width="1.2" fill="none"/></svg>
<!-- assign etc -->
<div class="a" style="left:1102px;top:816px;width:92px;height:20px;background:#5a5a5a;border-radius:4px 0 0 4px"></div>
<div class="a" style="left:1195px;top:816px;width:94px;height:20px;background:#5a5a5a;border-radius:0 4px 4px 0"></div>
<div class="a" style="left:1299px;top:816px;width:92px;height:20px;background:#5a5a5a;border-radius:4px 0 0 4px"></div>
<div class="a" style="left:1392px;top:816px;width:94px;height:20px;background:#5a5a5a;border-radius:0 4px 4px 0"></div>
<div class="t" style="left:1102px;top:818px;width:92px;text-align:center;color:#e6e6e6">Assign</div>
<div class="t" style="left:1195px;top:818px;width:94px;text-align:center;color:#e6e6e6">Remove</div>
<div class="t" style="left:1299px;top:818px;width:92px;text-align:center;color:#e6e6e6">Select</div>
<div class="t" style="left:1392px;top:818px;width:94px;text-align:center;color:#e6e6e6">Deselect</div>
<!-- custom properties -->
<svg class="a" style="left:1116px;top:854px" width="12" height="10"><path d="M1.5 2.5 L5.5 6.5 L9.5 2.5" stroke="#bdbdbd" stroke-width="1.1" fill="none"/></svg>
<div class="t" style="left:1132px;top:852px;color:#d6d6d6">Custom Properties</div>
<div class="a" style="left:1093px;top:872px;width:402px;height:48px;background:#323130;border-radius:0 0 5px 5px"></div>
<div class="a" style="left:1102px;top:881px;width:384px;height:20px;background:#5a5a5a;border-radius:4px"></div>
<svg class="a" style="left:1108px;top:883px" width="16" height="16"><path d="M7.5 2.5 V13.5 M2 8 H13" stroke="#e6e6e6" stroke-width="1.3"/></svg>
<div class="t" style="left:1102px;top:883px;width:400px;text-align:center;color:#e6e6e6">New</div>
<!-- motion paths -->
<svg class="a" style="left:1103px;top:931px" width="10" height="12"><path d="M2.5 1.5 L6.5 5.5 L2.5 9.5" stroke="#bdbdbd" stroke-width="1.1" fill="none"/></svg>
<div class="t" style="left:1117px;top:930px;color:#d6d6d6;font-size:14px">Motion Paths</div>
<svg class="a" style="left:1475px;top:934px" width="12" height="6"><g fill="#b0b0b0"><rect x="0" y="0" width="1.3" height="1.3"/><rect x="3" y="0" width="1.3" height="1.3"/><rect x="6" y="0" width="1.3" height="1.3"/><rect x="9" y="0" width="1.3" height="1.3"/><rect x="0" y="3" width="1.3" height="1.3"/><rect x="3" y="3" width="1.3" height="1.3"/><rect x="6" y="3" width="1.3" height="1.3"/><rect x="9" y="3" width="1.3" height="1.3"/></g></svg>
<!-- viewport display -->
<svg class="a" style="left:1101px;top:961px" width="12" height="10"><path d="M1.5 2.5 L5.5 6.5 L9.5 2.5" stroke="#bdbdbd" stroke-width="1.1" fill="none"/></svg>
<div class="t" style="left:1117px;top:959px;color:#d6d6d6;font-size:14px">Viewport Display</div>
<svg class="a" style="left:1475px;top:963px" width="12" height="6"><g fill="#b0b0b0"><rect x="0" y="0" width="1.3" height="1.3"/><rect x="3" y="0" width="1.3" height="1.3"/><rect x="6" y="0" width="1.3" height="1.3"/><rect x="9" y="0" width="1.3" height="1.3"/><rect x="0" y="3" width="1.3" height="1.3"/><rect x="3" y="3" width="1.3" height="1.3"/><rect x="6" y="3" width="1.3" height="1.3"/><rect x="9" y="3" width="1.3" height="1.3"/></g></svg>
<div class="a" style="left:1093px;top:979px;width:402px;height:100px;background:#373635"></div>
<div class="t" style="left:1142px;top:990px;width:100px;text-align:right;color:#dcdcdc">Display As</div>
<div class="a" style="left:1252px;top:988px;width:213px;height:20px;background:#282828;border:1px solid #3c3c3c;border-radius:4px"></div>
<div class="t" style="left:1260px;top:990px;color:#e6e6e6">Octahedral</div>
<svg class="a" style="left:1452px;top:994px" width="10" height="10"><path d="M1.5 2.5 L4.5 5.5 L7.5 2.5" stroke="#e0e0e0" stroke-width="1.2" fill="none"/></svg>
<div class="a" style="left:1474px;top:995px;width:5px;height:5px;border-radius:3px;background:#e0e0e0"></div>
<div class="t" style="left:1140px;top:1017px;width:100px;text-align:right;color:#dcdcdc">Show</div>
<div class="a" style="left:1252px;top:1018px;width:14px;height:14px;background:#5079b8;border-radius:3px"></div>
<svg class="a" style="left:1252px;top:1018px" width="14" height="14"><path d="M3 7.5 L5.8 10.3 L11 4" stroke="#f4f4f4" stroke-width="1.6" fill="none"/></svg>
<div class="t" style="left:1271px;top:1017px;color:#e0e0e0">Names</div>
<div class="a" style="left:1474px;top:1022px;width:5px;height:5px;border-radius:3px;background:#e0e0e0"></div>
<div class="a" style="left:1252px;top:1042px;width:14px;height:14px;background:#5079b8;border-radius:3px"></div>
<svg class="a" style="left:1252px;top:1042px" width="14" height="14"><path d="M3 7.5 L5.8 10.3 L11 4" stroke="#f4f4f4" stroke-width="1.6" fill="none"/></svg>
<div class="t" style="left:1271px;top:1041px;color:#e0e0e0">Shapes</div>
<div class="a" style="left:1474px;top:1046px;width:5px;height:5px;border-radius:3px;background:#e0e0e0"></div>
<div class="a" style="left:1252px;top:1066px;width:14px;height:14px;background:#5079b8;border-radius:3px"></div>
<div class="t" style="left:1271px;top:1065px;color:#e0e0e0">Bone Colors</div>
</body></html>
